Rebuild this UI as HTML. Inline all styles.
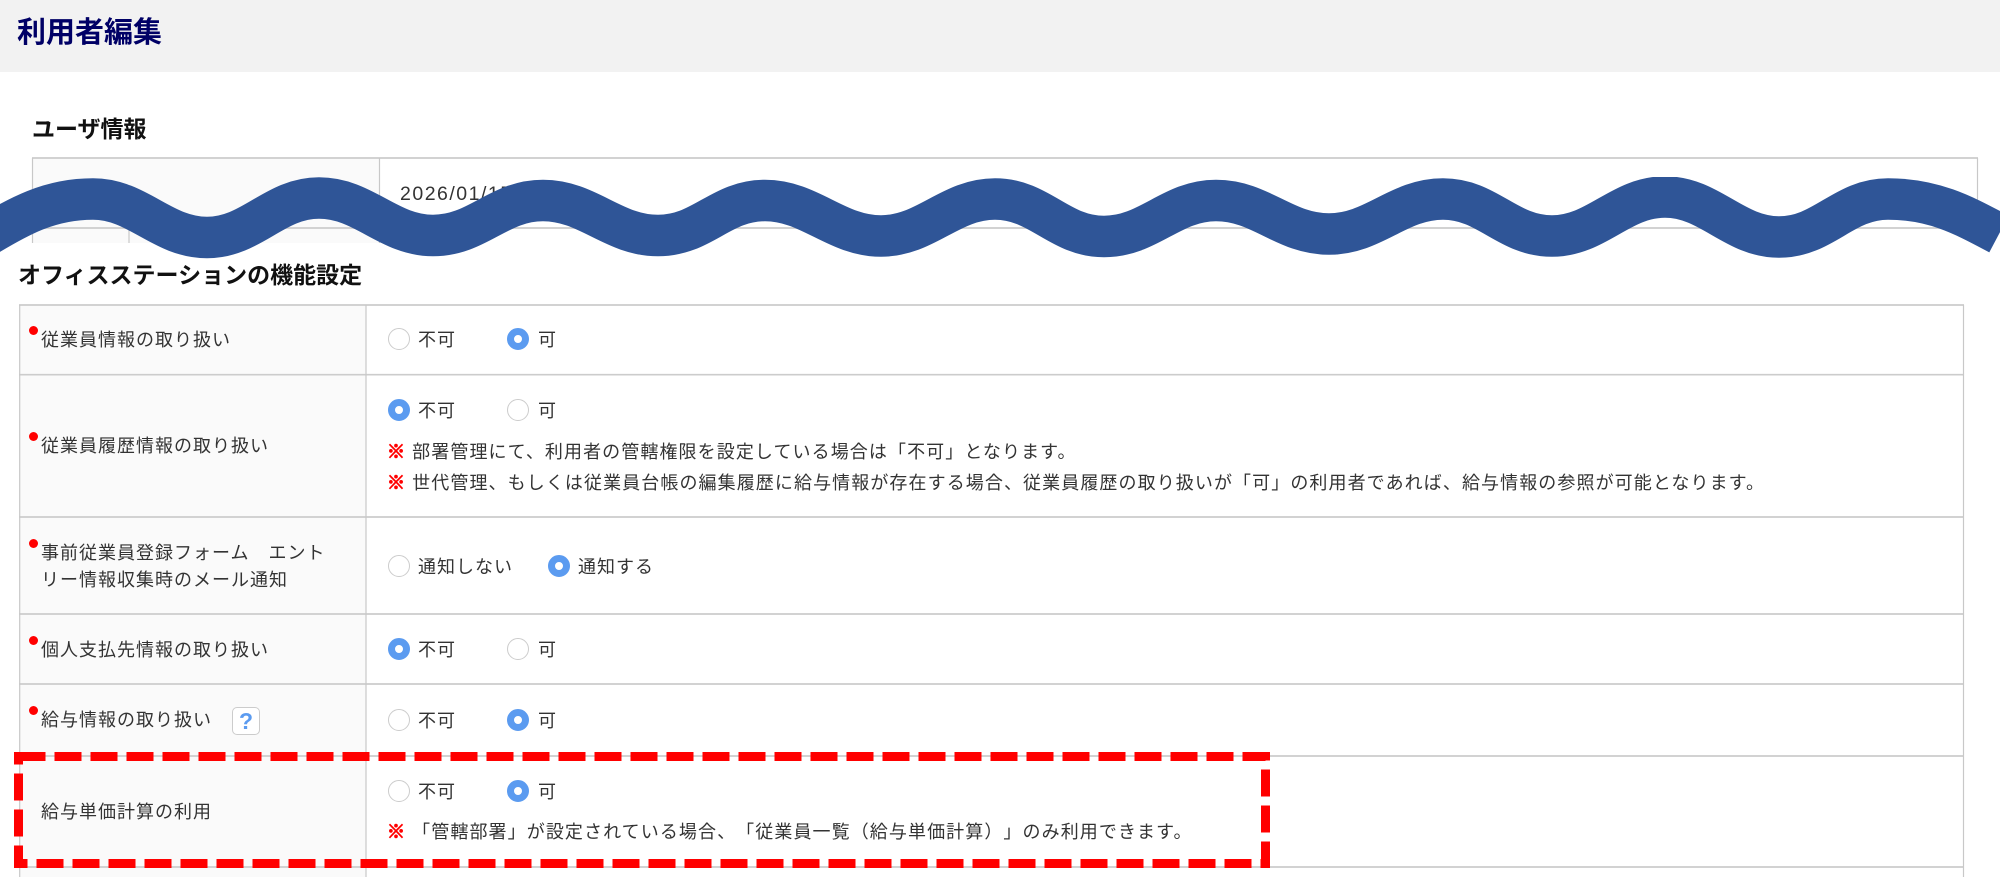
<!DOCTYPE html>
<html lang="ja">
<head>
<meta charset="utf-8">
<title>利用者編集</title>
<style>
html,body{margin:0;padding:0;background:#fff;width:2000px;height:877px;overflow:hidden}
body{position:relative;font-family:"Liberation Sans","Noto Sans CJK JP",sans-serif;color:#333;text-spacing-trim:space-all;font-feature-settings:"palt" 0}
.t{position:absolute;white-space:nowrap;font-size:18px;letter-spacing:1px;line-height:28px;height:28px;margin-top:1px}
.n{letter-spacing:1.09px}
.h{position:absolute;white-space:nowrap;font-weight:bold;font-size:23px;line-height:30px;color:#111}
.r{position:absolute;width:22px;height:22px;border-radius:50%;box-sizing:border-box;background:#fff;border:1.5px solid #ccc}
.r.on{border:7px solid #5b9bf0}
.d{position:absolute;width:9px;height:9px;border-radius:50%;background:#f00;left:29px}
.m{color:#f00;font-weight:bold;-webkit-text-stroke:1px #f00}
#help{position:absolute;left:232px;top:707px;width:28px;height:28px;box-sizing:border-box;border:1.5px solid #ccc;border-radius:5px;background:#fff;color:#5b9bf0;font:bold 23px/26px "Liberation Sans",sans-serif;text-align:center}
svg{position:absolute;left:0;top:0}
</style>
</head>
<body>
<div style="position:absolute;left:0;top:0;width:2000px;height:72px;background:#f2f2f2"></div>
<div class="h" style="left:17px;top:15px;font-size:29px;line-height:36px;color:#000066">利用者編集</div>
<div class="h" style="left:32px;top:114px">ユーザ情報</div>

<svg width="2000" height="877" viewBox="0 0 2000 877">
<rect x="32" y="158" width="347" height="85" fill="#fafafa"/>
<rect x="20" y="305" width="346" height="572" fill="#fafafa"/>
<g stroke="#ccc" stroke-width="1.7" fill="none">
<path d="M32 158H1978M32 228H1978"/>
<path d="M19 305H1964M19 374.7H1964M19 517H1964M19 614H1964M19 684H1964M19 756H1964M19 867H1964"/>
</g>
<g stroke="#c8c8c8" stroke-width="1.2" fill="none">
<path d="M32.5 243V158M1977.5 158V243M129 228V243M379.5 158V243"/>
<path d="M19.7 877V305M1963.5 305V877M366 305V877"/>
</g>
</svg>

<div class="t" style="left:400px;top:179px;font-size:19.5px;letter-spacing:1.5px">2026/01/15</div>

<div class="h" style="left:18px;top:260px">オフィスステーションの機能設定</div>

<div class="d" style="top:326px"></div>
<div class="t" style="left:41px;top:325px">従業員情報の取り扱い</div>
<div class="r" style="left:388px;top:328px"></div><div class="t" style="left:418px;top:325px">不可</div>
<div class="r on" style="left:507px;top:328px"></div><div class="t" style="left:538px;top:325px">可</div>

<div class="d" style="top:432px"></div>
<div class="t" style="left:41px;top:431px">従業員履歴情報の取り扱い</div>
<div class="r on" style="left:388px;top:399px"></div><div class="t" style="left:418px;top:396px">不可</div>
<div class="r" style="left:507px;top:399px"></div><div class="t" style="left:538px;top:396px">可</div>
<div class="t n" style="left:387px;top:437px"><span class="m">※</span> 部署管理にて、利用者の管轄権限を設定している場合は「不可」となります。</div>
<div class="t n" style="left:387px;top:468px"><span class="m">※</span> 世代管理、もしくは従業員台帳の編集履歴に給与情報が存在する場合、従業員履歴の取り扱いが「可」の利用者であれば、給与情報の参照が可能となります。</div>

<div class="d" style="top:539px"></div>
<div class="t" style="left:41px;top:538px">事前従業員登録フォーム　エント</div>
<div class="t" style="left:41px;top:565px">リー情報収集時のメール通知</div>
<div class="r" style="left:388px;top:555px"></div><div class="t" style="left:418px;top:552px">通知しない</div>
<div class="r on" style="left:548px;top:555px"></div><div class="t" style="left:578px;top:552px">通知する</div>

<div class="d" style="top:636px"></div>
<div class="t" style="left:41px;top:635px">個人支払先情報の取り扱い</div>
<div class="r on" style="left:388px;top:638px"></div><div class="t" style="left:418px;top:635px">不可</div>
<div class="r" style="left:507px;top:638px"></div><div class="t" style="left:538px;top:635px">可</div>

<div class="d" style="top:706px"></div>
<div class="t" style="left:41px;top:705px">給与情報の取り扱い</div>
<div id="help">?</div>
<div class="r" style="left:388px;top:709px"></div><div class="t" style="left:418px;top:706px">不可</div>
<div class="r on" style="left:507px;top:709px"></div><div class="t" style="left:538px;top:706px">可</div>

<div class="t" style="left:41px;top:797px">給与単価計算の利用</div>
<div class="r" style="left:388px;top:780px"></div><div class="t" style="left:418px;top:777px">不可</div>
<div class="r on" style="left:507px;top:780px"></div><div class="t" style="left:538px;top:777px">可</div>
<div class="t n" style="left:387px;top:817px"><span class="m">※</span> 「管轄部署」が設定されている場合、「従業員一覧（給与単価計算）」のみ利用できます。</div>

<svg width="2000" height="877" viewBox="0 0 2000 877">
<defs><clipPath id="c"><rect x="-50" y="177" width="2100" height="100"/></clipPath></defs>
<path clip-path="url(#c)" fill="none" stroke="#2f5597" stroke-width="41.5" d="M-22 241C20 215 50 199 93 199C138 199 162 237.5 207 237.5C252 237.5 274 198 319 198C364 198 388 235.5 433 235.5C478 235.5 498 200.5 543 200.5C588 200.5 613 235.5 658 235.5C703 235.5 720 200.5 765 200.5C810 200.5 836 236 881 236C926 236 950 199 995 199C1040 199 1059 236.5 1104 236.5C1149 236.5 1171 200.5 1216 200.5C1261 200.5 1284 234 1329 234C1374 234 1398 199 1443 199C1488 199 1507 236 1552 236C1597 236 1620 197 1665 197C1710 197 1734 237 1779 237C1824 237 1843 199 1888 199C1935 199 1965 216 1999 234"/>
<rect x="18.5" y="756.5" width="1247" height="107" fill="none" stroke="#f00" stroke-width="9" stroke-dasharray="27 9"/>
</svg>
</body>
</html>
